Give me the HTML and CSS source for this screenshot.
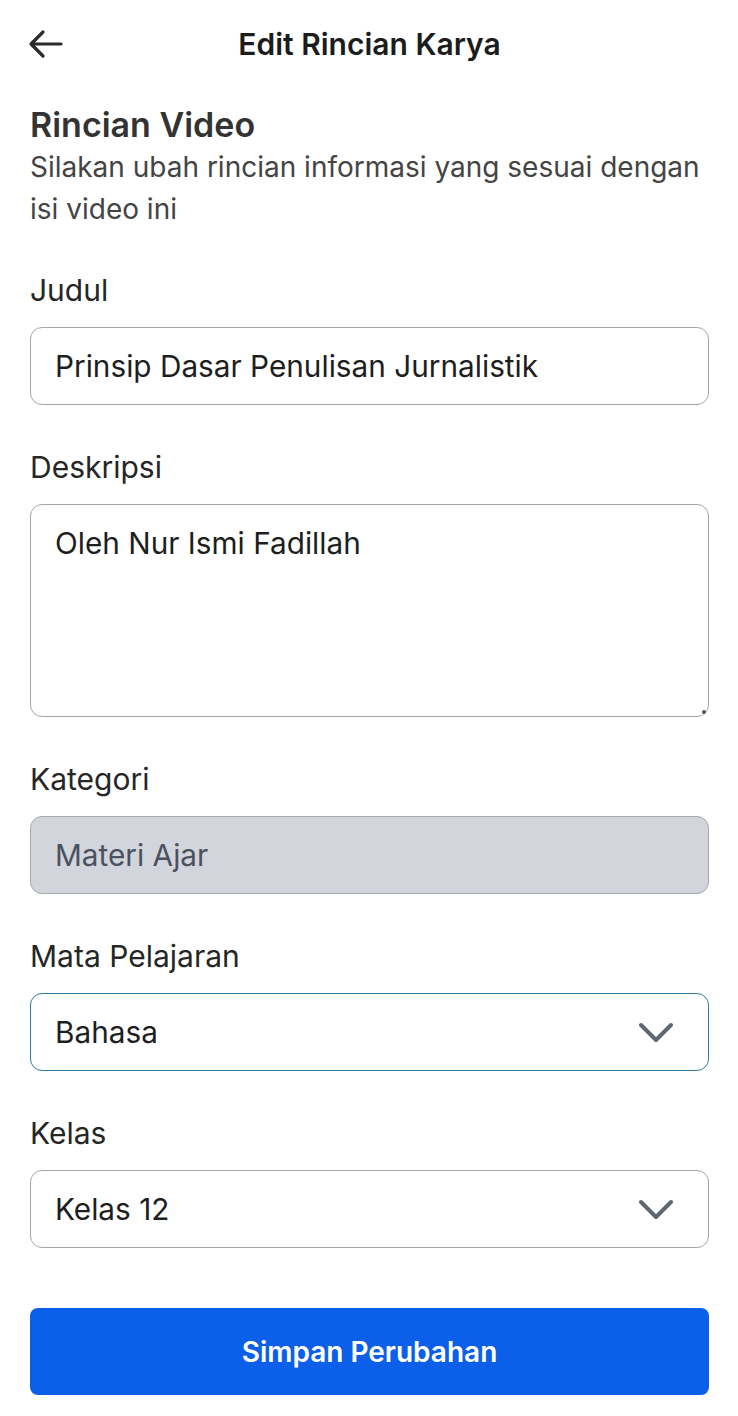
FILE: index.html
```html
<!DOCTYPE html>
<html lang="id">
<head>
<meta charset="utf-8">
<title>Edit Rincian Karya</title>
<link rel="stylesheet" href="styles.css">
</head>
<body>
<div class="page">
  <header class="topbar">
    <span class="back">
      <svg width="36" height="30" viewBox="0 0 36 30" fill="none" stroke="#2b2b2b" stroke-width="3.2" stroke-linecap="round" stroke-linejoin="round"><path d="M33 15H3M15 3L3 15l12 12"/></svg>
    </span>
    <h1 class="title">Edit Rincian Karya</h1>
  </header>

  <section class="intro">
    <h2 class="heading">Rincian Video</h2>
    <p class="sub">Silakan ubah rincian informasi yang sesuai dengan isi video ini</p>
  </section>

  <form class="form">
    <div class="field">
      <label class="label">Judul</label>
      <div class="input">Prinsip Dasar Penulisan Jurnalistik</div>
    </div>
    <div class="field">
      <label class="label">Deskripsi</label>
      <div class="input textarea">Oleh Nur Ismi Fadillah<span class="grip"></span></div>
    </div>
    <div class="field">
      <label class="label">Kategori</label>
      <div class="input disabled">Materi Ajar</div>
    </div>
    <div class="field">
      <label class="label">Mata Pelajaran</label>
      <div class="input select focused">Bahasa
        <svg class="chev" width="36" height="22" viewBox="0 0 36 22" fill="none" stroke="#5f6670" stroke-width="4" stroke-linecap="round" stroke-linejoin="round"><path d="M3 3l15 15L33 3"/></svg>
      </div>
    </div>
    <div class="field">
      <label class="label">Kelas</label>
      <div class="input select">Kelas 12
        <svg class="chev" width="36" height="22" viewBox="0 0 36 22" fill="none" stroke="#5f6670" stroke-width="4" stroke-linecap="round" stroke-linejoin="round"><path d="M3 3l15 15L33 3"/></svg>
      </div>
    </div>
    <button type="button" class="save">Simpan Perubahan</button>
  </form>
</div>
</body>
</html>
```

FILE: styles.css
```css
* { box-sizing: border-box; }
html, body { margin: 0; padding: 0; background: #fff; }
body { font-family: Inter, Roboto, "Noto Sans", sans-serif; color: #222; }
.page { width: 738px; padding: 0 29px 0 30px; }

.topbar {
  height: 88px;
  display: flex;
  align-items: center;
  justify-content: center;
  position: relative;
}
.back { position: absolute; left: -2px; top: 29px; display: flex; }
.title { margin: 0; font-size: 30px; font-weight: 600; color: #1c1c1c; }

.intro { padding-top: 17px; }
.heading { margin: 0; font-size: 34px; font-weight: 600; color: #333; line-height: 40px; }
.sub { margin: 1px 0 0; font-size: 28px; line-height: 42px; color: #444; }

.form { display: flex; flex-direction: column; gap: 42px; margin-top: 40px; }
.field { display: flex; flex-direction: column; gap: 17px; }
.label { font-size: 30px; line-height: 40px; color: #262626; }

.input {
  height: 78px;
  border: 1.5px solid #a6a6a6;
  border-radius: 12px;
  padding: 0 22px 0 24px;
  display: flex;
  align-items: center;
  font-size: 29.75px;
  color: #1e1e1e;
  background: #fff;
}
.textarea { height: 213px; align-items: flex-start; padding-top: 20px; position: relative; }
.grip { position: absolute; right: 2px; bottom: 2px; width: 4px; height: 4px; background: #555; border-radius: 50%; }
.disabled { background: #d2d5dc; color: #4a5260; border-color: #a6a8ad; }
.select { justify-content: space-between; padding-right: 34px; }
.focused { border-color: #2f7c9e; }
.chev { display: block; margin-top: 2px; }

.save {
  margin-top: 18px;
  height: 87px;
  border: 0;
  border-radius: 8px;
  background: #0b5fe9;
  color: #fff;
  font-family: Inter, Roboto, sans-serif;
  font-size: 28px;
  font-weight: 600;
  width: 100%;
  cursor: pointer;
}
```
